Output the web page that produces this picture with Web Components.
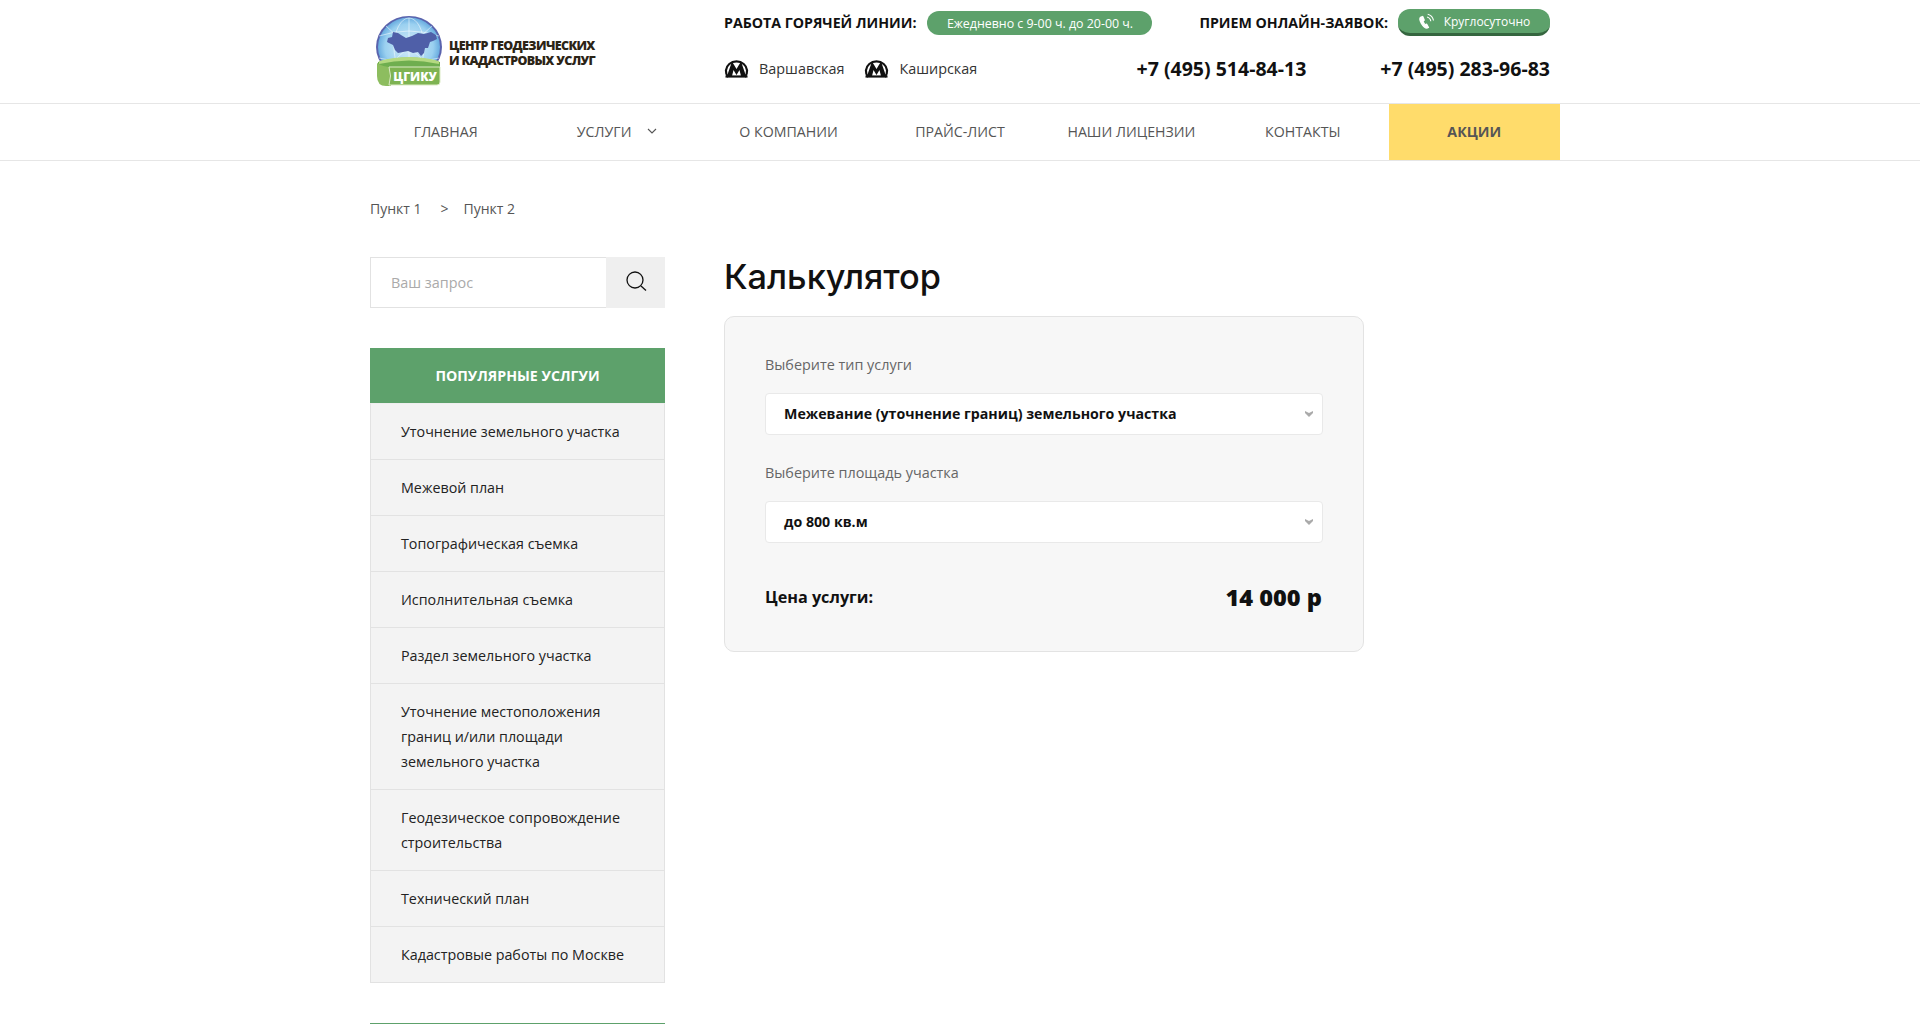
<!DOCTYPE html>
<html lang="ru">
<head>
<meta charset="utf-8">
<title>Калькулятор</title>
<style>
  html, body { margin: 0; padding: 0; background: #fff; }
  body { font-family: "Open Sans", "Noto Sans", sans-serif; color: #111; height: 1024px; overflow: hidden; }
</style>
</head>
<body>
<site-header></site-header>
<main-nav></main-nav>
<page-body></page-body>

<script>
/* логотип, метро и шапка */
class SiteLogo extends HTMLElement {
  constructor() {
    super();
    this.attachShadow({ mode: 'open' }).innerHTML = `
      <style>
        :host { display: flex; align-items: flex-start; gap: 5px; }
        svg { display: block; flex: none; }
        .name {
          font-size: 12.500px; line-height: 15px; font-weight: 800; color: #2c2416;
          letter-spacing: -0.65px; white-space: nowrap; padding-top: 22px;
        }
      </style>
      <svg width="70" height="74" viewBox="0 0 70 74">
        <defs>
          <radialGradient id="sea" cx="50%" cy="50%" r="60%">
            <stop offset="0" stop-color="#d8edf9"/>
            <stop offset="0.65" stop-color="#9ad0f0"/>
            <stop offset="1" stop-color="#3a8ad0"/>
          </radialGradient>
        </defs>
        <ellipse cx="35" cy="31" rx="33" ry="31" fill="#5a63ad"/>
        <ellipse cx="35" cy="31" rx="31" ry="29.500" fill="url(#sea)"/>
        <g fill="none" stroke="#fff" stroke-opacity=".65" stroke-width=".8">
          <ellipse cx="35" cy="31" rx="15" ry="29"/>
          <path d="M5 20q30-10 60 0M5 42q30 8 60 0M35 2v58M12 10l46 42M58 10l-46 42"/>
        </g>
        <path d="M14 22l4-1 1-5 5 1 3 2 5 3 6-2 6-3 6 1 7-2 5 3 1 4-4 2-3 1-2 6-3 0-1 5-3 3-3-4-5 1-5-2-5 1-5 1-3-3-2-5-6-3z" fill="#4f5fa8"/>
        <path d="M4 46q31-9 62 0v12H4z" fill="#6fae4f"/>
        <path d="M5 45q30-8 60 0v3q-30-7-60 0z" fill="#b5d981"/>
        <path d="M3 47q6 4 14 4v19H12Q3 70 3 60z" fill="#8dbd5f"/>
        <path d="M15 51h51v15q0 3-3 3H15q3-9 0-18z" fill="#7eb352" stroke="#dcebc6" stroke-width="1"/>
        <text x="41" y="65" text-anchor="middle" font-family="Open Sans, sans-serif" font-weight="800" font-size="12" fill="#fff">ЦГИКУ</text>
      </svg>
      <div class="name">ЦЕНТР ГЕОДЕЗИЧЕСКИХ<br>И КАДАСТРОВЫХ УСЛУГ</div>`;
  }
}

class MetroStation extends HTMLElement {
  constructor() {
    super();
    this.attachShadow({ mode: 'open' }).innerHTML = `
      <style>
        :host { display: inline-flex; align-items: center; gap: 10px; font-size: 14.400px; color: #333; }
        svg { display: block; }
      </style>
      <svg width="25" height="20" viewBox="0 0 25 20">
        <path d="M4.200 19A10.600 9.600 0 1 1 20.800 19" fill="#fff" stroke="#111" stroke-width="2.200"/>
        <path d="M1.500 18.500h22" stroke="#111" stroke-width="2.200"/>
        <path d="M3 18L8 3.500l4.500 7.500 4.500-7.500 5 14.500h-5l-1.500-6-3 5-3-5-1.500 6z" fill="#111"/>
      </svg>
      <span><slot></slot></span>`;
  }
}

class SiteHeader extends HTMLElement {
  constructor() {
    super();
    this.attachShadow({ mode: 'open' }).innerHTML = `
      <style>
        :host { display: block; height: 103px; border-bottom: 1px solid #e6e6e6; }
        .wrap { width: 1200px; padding: 0 10px; box-sizing: border-box; margin: 0 auto; display: flex; height: 103px; }
        site-logo { width: 354px; padding: 16px 0 0 4px; box-sizing: border-box; align-self: flex-start; }
        .info { flex: 1; }
        .row { display: flex; align-items: center; }
        .top { height: 24px; margin-top: 11px; }
        .bottom { margin-top: 21px; height: 24px; }
        b { font-size: 14.200px; font-weight: 700; color: #111; white-space: nowrap; padding-bottom: 2px; }
        .pill {
          height: 24px; border-radius: 12px; background: #5da16b; color: #fff; font-size: 12px;
          display: flex; align-items: center; justify-content: center; white-space: nowrap;
        }
        .hours { width: 225px; margin-left: 11px; font-size: 12.400px; }
        .online { margin-left: auto; }
        .call {
          width: 152px; height: 24px; margin-left: 10px; border-bottom: 3px solid #35663f; margin-top: 1px;
          gap: 9px; position: relative; top: -1px;
        }
        metro-station + metro-station { margin-left: 20px; }
        .phones { margin-left: auto; display: flex; gap: 74px; font-size: 19.500px; font-weight: 700; color: #111; white-space: nowrap; }
      </style>
      <div class="wrap">
        <site-logo></site-logo>
        <div class="info">
          <div class="row top">
            <b>РАБОТА ГОРЯЧЕЙ ЛИНИИ:</b>
            <span class="pill hours">Ежедневно с 9-00 ч. до 20-00 ч.</span>
            <b class="online">ПРИЕМ ОНЛАЙН-ЗАЯВОК:</b>
            <span class="pill call">
              <svg width="17" height="17" viewBox="0 0 17 17" fill="none">
                <path d="M3 4c-1.600 1-1.600 3 .4 6.300 2 3.300 4 4.900 5.800 4.700l1.300-.5-1.800-3.300-1.400.6c-1-.8-2-2.500-2.300-3.900l1.200-.8-1.500-3.600z" fill="#fff" stroke="#fff" stroke-width="1.300" stroke-linejoin="round"/>
                <path d="M9 4a5 5 0 0 1 3.800 4.300M9.700 1.300a8 8 0 0 1 5.800 6.200" stroke="#fff" stroke-width="1.100"/>
              </svg>
              <span>Круглосуточно</span>
            </span>
          </div>
          <div class="row bottom">
            <metro-station>Варшавская</metro-station>
            <metro-station>Каширская</metro-station>
            <div class="phones"><span>+7 (495) 514-84-13</span><span>+7 (495) 283-96-83</span></div>
          </div>
        </div>
      </div>`;
  }
}

class MainNav extends HTMLElement {
  constructor() {
    super();
    const items = [['ГЛАВНАЯ'], ['УСЛУГИ', true], ['О КОМПАНИИ'], ['ПРАЙС-ЛИСТ'], ['НАШИ ЛИЦЕНЗИИ'], ['КОНТАКТЫ']];
    const links = items.map(([t, caret]) => `
      <a>${t}${caret ? `<svg width="10" height="6" viewBox="0 0 10 6" fill="none"><path d="M1 1l4 4 4-4" stroke="#555" stroke-width="1.100"/></svg>` : ''}</a>`).join('');
    this.attachShadow({ mode: 'open' }).innerHTML = `
      <style>
        :host { display: block; height: 56px; border-bottom: 1px solid #e6e6e6; }
        nav { width: 1200px; height: 56px; margin: 0 auto; display: flex; }
        a {
          flex: 1 1 0; display: flex; align-items: center; justify-content: center; gap: 16px; height: 56px;
          padding-bottom: 2px; box-sizing: border-box; font-size: 14.200px; color: #555; white-space: nowrap;
        }
        a.sale { background: #ffdc6b; font-weight: 700; }
      </style>
      <nav>${links}<a class="sale">АКЦИИ</a></nav>`;
  }
}

class SearchBox extends HTMLElement {
  constructor() {
    super();
    this.attachShadow({ mode: 'open' }).innerHTML = `
      <style>
        :host { display: flex; height: 51px; }
        input {
          width: 236px; height: 51px; box-sizing: border-box; border: 1px solid #e2e2e2; border-right: 0;
          padding: 0 20px 1px; font: 14.400px "Open Sans", sans-serif; outline: 0; background: #fff;
        }
        input::placeholder { color: #aaa; opacity: 1; }
        button { width: 59px; height: 51px; border: 0; padding: 0 0 3px; box-sizing: border-box; background: #efefef; display: flex; align-items: center; justify-content: center; }
      </style>
      <input placeholder="Ваш запрос">
      <button aria-label="Поиск">
        <svg width="22" height="22" viewBox="0 0 22 22" fill="none" stroke="#111" stroke-width="1.300">
          <circle cx="10" cy="10" r="8"/><path d="M16 16l5 4.500"/>
        </svg>
      </button>`;
  }
}

class ServiceMenu extends HTMLElement {
  constructor() {
    super();
    const list = ['Уточнение земельного участка', 'Межевой план', 'Топографическая съемка', 'Исполнительная съемка',
      'Раздел земельного участка', 'Уточнение местоположения границ и/или площади земельного участка',
      'Геодезическое сопровождение строительства', 'Технический план', 'Кадастровые работы по Москве'];
    this.attachShadow({ mode: 'open' }).innerHTML = `
      <style>
        :host { display: block; margin-top: 40px; }
        h3 {
          margin: 0; height: 55px; line-height: 55px; background: #5da16b; color: #fff; text-align: center;
          font-size: 14.200px; font-weight: 700;
        }
        ul { margin: 0; padding: 0; list-style: none; background: #f3f3f3; border: 1px solid #e2e2e2; border-top-color: #eee; }
        li { padding: 15px 30px; font-size: 14.300px; line-height: 25px; color: #222; border-bottom: 1px solid #e2e2e2; }
        li:last-child { border-bottom: 0; }
        .next { height: 1px; margin-top: 40px; background: #5da16b; }
      </style>
      <h3>ПОПУЛЯРНЫЕ УСЛГУИ</h3>
      <ul>${list.map(t => `<li>${t}</li>`).join('')}</ul>
      <div class="next"></div>`;
  }
}

class CalcSelect extends HTMLElement {
  constructor() {
    super();
    this.attachShadow({ mode: 'open' }).innerHTML = `
      <style>
        :host { display: block; }
        label { display: block; font-size: 14.400px; line-height: 20px; color: #666; margin-bottom: 18px; }
        .box {
          height: 42px; box-sizing: border-box; background: #fff; border: 1px solid #e9e9e9; border-radius: 4px;
          padding: 0 18px 1px; display: flex; align-items: center; justify-content: space-between;
          font-size: 14.200px; font-weight: 700; color: #111;
        }
        svg { display: block; margin-right: -9px; }
      </style>
      <label>${this.getAttribute('label')}</label>
      <div class="box">
        <span><slot></slot></span>
        <svg width="8" height="6" viewBox="0 0 8 6"><path d="M0 0l4 2 4-2v2l-4 4-4-4z" fill="#aaa"/></svg>
      </div>`;
  }
}

class PriceCalc extends HTMLElement {
  constructor() {
    super();
    this.attachShadow({ mode: 'open' }).innerHTML = `
      <style>
        :host { display: block; width: 640px; box-sizing: border-box; background: #f7f7f7; border: 1px solid #e3e3e3; border-radius: 10px; padding: 38px 41px 34px 40px; }
        calc-select + calc-select { margin-top: 28px; }
        calc-select { margin-right: -1px; }
        .price { display: flex; align-items: center; justify-content: space-between; margin-top: 34px; height: 40px; color: #111; font-weight: 700; }
        .price span { font-size: 16.200px; }
        .price strong { font-size: 23.600px; }
      </style>
      <calc-select label="Выберите тип услуги">Межевание (уточнение границ) земельного участка</calc-select>
      <calc-select label="Выберите площадь участка">до 800 кв.м</calc-select>
      <div class="price"><span>Цена услуги:</span><strong>14 000 р</strong></div>`;
  }
}

class PageBody extends HTMLElement {
  constructor() {
    super();
    this.attachShadow({ mode: 'open' }).innerHTML = `
      <style>
        :host { display: block; width: 1200px; padding: 0 10px; box-sizing: border-box; margin: 0 auto; }
        .crumbs { display: flex; padding-top: 38px; font-size: 14px; line-height: 20px; color: #555; height: 58px; }
        .crumbs i { font-style: normal; margin: 0 15px 0 19px; }
        .cols { display: flex; gap: 59px; }
        aside { width: 295px; flex: none; }
        h1 { margin: -10px 0 10px; font: 500 34.300px/59px Inter, "Noto Sans", sans-serif; color: #111; }
      </style>
      <div class="crumbs"><span>Пункт 1</span><i>&gt;</i><span>Пункт 2</span></div>
      <div class="cols">
        <aside><search-box></search-box><service-menu></service-menu></aside>
        <section><h1>Калькулятор</h1><price-calc></price-calc></section>
      </div>`;
  }
}

customElements.define('site-logo', SiteLogo);
customElements.define('metro-station', MetroStation);
customElements.define('site-header', SiteHeader);
customElements.define('main-nav', MainNav);
customElements.define('search-box', SearchBox);
customElements.define('service-menu', ServiceMenu);
customElements.define('calc-select', CalcSelect);
customElements.define('price-calc', PriceCalc);
customElements.define('page-body', PageBody);
</script>
</body>
</html>
